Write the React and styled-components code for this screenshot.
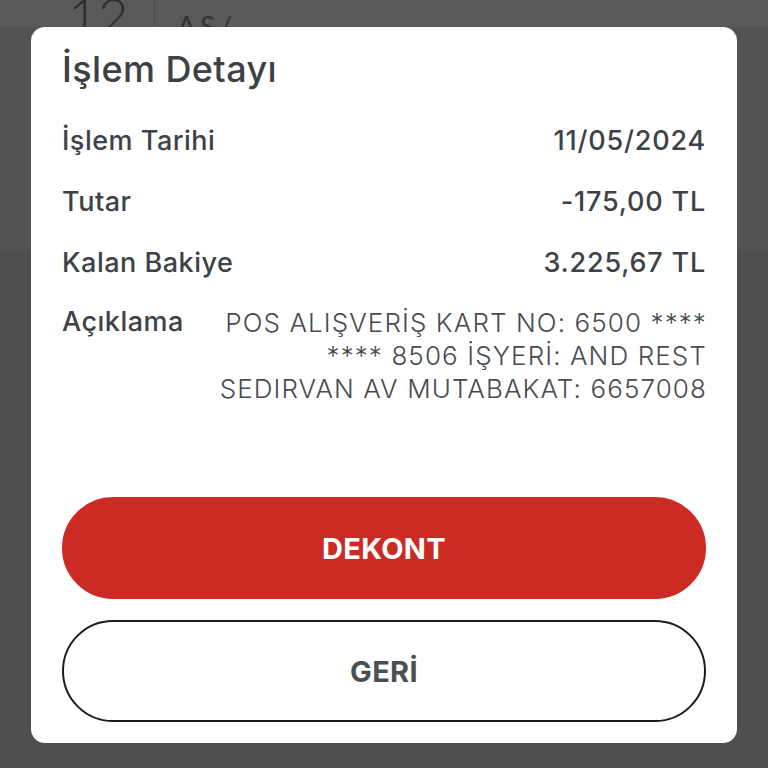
import React from 'react'
import styled, { createGlobalStyle } from 'styled-components'

const GlobalStyle = createGlobalStyle`
  html, body {
    margin: 0;
    padding: 0;
    width: 768px;
    height: 768px;
    overflow: hidden;
    background: #4f5050;
    font-family: "Inter", "Open Sans", "Liberation Sans", sans-serif;
  }
`

const rows = [
  { label: 'İşlem Tarihi', value: '11/05/2024' },
  { label: 'Tutar', value: '-175,00 TL' },
  { label: 'Kalan Bakiye', value: '3.225,67 TL' },
]

function App() {
  return (
    <>
      <GlobalStyle />
      <Page>
        <TopStrip>
          <DayNumber>12</DayNumber>
          <Divider />
          <Merchant>AS/</Merchant>
        </TopStrip>
      </Page>
      <Overlay>
        <Modal>
          <Title>İşlem Detayı</Title>
          <Details>
            {rows.map((row) => (
              <Row key={row.label}>
                <Label>{row.label}</Label>
                <Value>{row.value}</Value>
              </Row>
            ))}
            <Row align="flex-start" shift={-2}>
              <Label>Açıklama</Label>
              <Description>
                POS ALIŞVERİŞ KART NO: 6500 ****<br />
                **** 8506 İŞYERİ: AND REST<br />
                SEDIRVAN AV MUTABAKAT: 6657008
              </Description>
            </Row>
          </Details>
          <Buttons>
            <Button primary>DEKONT</Button>
            <Button>GERİ</Button>
          </Buttons>
        </Modal>
      </Overlay>
    </>
  )
}

export default App

const Page = styled.div`
  width: 768px;
  height: 768px;
  background: linear-gradient(180deg, #525353 0, #525353 250px, #4e4f4f 250px);
`

const TopStrip = styled.div`
  height: 27px;
  background: #595959;
  display: flex;
  align-items: flex-end;
  overflow: hidden;
  padding-left: 68px;
`

const DayNumber = styled.div`
  font-family: "Lato", sans-serif;
  font-weight: 300;
  font-size: 52px;
  line-height: 52px;
  color: #2e2e2e;
  margin-bottom: -14px;
  width: 86px;
`

const Divider = styled.div`
  width: 1px;
  align-self: stretch;
  background: #4a4a4a;
`

const Merchant = styled.div`
  font-family: "Lato", sans-serif;
  font-size: 28px;
  letter-spacing: 4px;
  color: #333;
  margin-left: 22px;
  margin-bottom: -16px;
`

const Overlay = styled.div`
  position: fixed;
  inset: 0;
  padding: 27px 31px 25px 31px;
  box-sizing: border-box;
`

const Modal = styled.div`
  background: #fff;
  border-radius: 14px;
  height: 100%;
  box-sizing: border-box;
  padding: 18px 31px 21px 31px;
  display: flex;
  flex-direction: column;
`

const Title = styled.h1`
  margin: 0;
  font-size: 36px;
  font-weight: 550;
  color: #3c4146;
  line-height: 48px;
  letter-spacing: 0.4px;
`

const Details = styled.div`
  display: flex;
  flex-direction: column;
  gap: 27px;
  margin-top: 31px;
  flex: 1;
`

const Row = styled.div`
  display: flex;
  justify-content: space-between;
  align-items: ${(p) => p.align || 'center'};
  margin-top: ${(p) => p.shift || 0}px;
`

const Label = styled.div`
  font-size: 27px;
  font-weight: 500;
  color: #3d4248;
  line-height: 34px;
  white-space: nowrap;
  letter-spacing: 0.5px;
`

const Value = styled(Label)`
  letter-spacing: 0.8px;
`

const Description = styled.div`
  font-size: 26px;
  font-weight: 300;
  color: #464b51;
  line-height: 33px;
  text-align: right;
  letter-spacing: 1.1px;
  margin-right: -1px;
  padding-top: 1px;
`

const Buttons = styled.div`
  display: flex;
  flex-direction: column;
  gap: 21px;
`

const Button = styled.button`
  height: 102px;
  border-radius: 51px;
  border: 2px solid ${(p) => (p.primary ? '#cc2b24' : '#1c1c1c')};
  background: ${(p) => (p.primary ? '#cc2b24' : '#fff')};
  color: ${(p) => (p.primary ? '#fff' : '#4a4f55')};
  font-family: "Inter", sans-serif;
  font-size: 29px;
  font-weight: 700;
  letter-spacing: 0.3px;
  cursor: pointer;
`
